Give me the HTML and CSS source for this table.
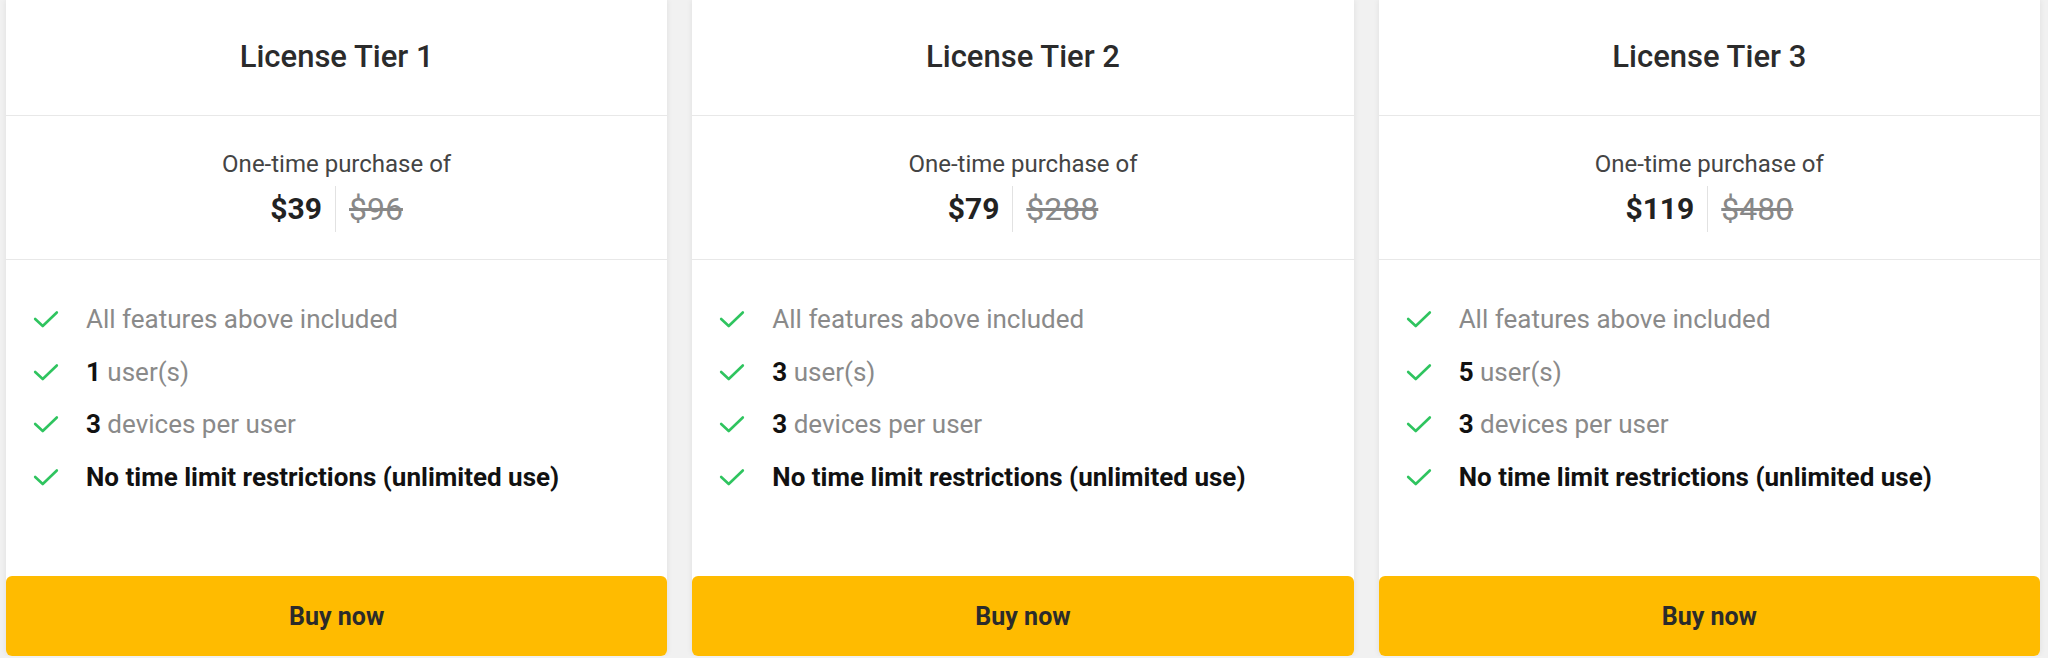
FILE: index.html
```html
<!DOCTYPE html>
<html lang="en">
<head>
    <meta charset="UTF-8">
    <meta name="viewport" content="width=device-width, initial-scale=1.0">
    <title>License tiers</title>
    <link rel="stylesheet" href="styles.css">
</head>
<body>
    <div class="plans">
        <!-- Tier 1 -->
        <div class="card">
            <div class="card-head">License Tier 1</div>
            <div class="price-box">
                <div class="price-label">One-time purchase of</div>
                <div class="price-row">
                    <span class="price-now">$39</span>
                    <span class="price-old">$96</span>
                </div>
            </div>
            <ul class="features">
                <li><svg class="check" viewBox="0 0 24 18"><polyline points="2,9 9,15.5 22,3"/></svg><span>All features above included</span></li>
                <li><svg class="check" viewBox="0 0 24 18"><polyline points="2,9 9,15.5 22,3"/></svg><span><b>1</b> user(s)</span></li>
                <li><svg class="check" viewBox="0 0 24 18"><polyline points="2,9 9,15.5 22,3"/></svg><span><b>3</b> devices per user</span></li>
                <li class="strong"><svg class="check" viewBox="0 0 24 18"><polyline points="2,9 9,15.5 22,3"/></svg><span>No time limit restrictions (unlimited use)</span></li>
            </ul>
            <button class="buy">Buy now</button>
        </div>

        <!-- Tier 2 -->
        <div class="card">
            <div class="card-head">License Tier 2</div>
            <div class="price-box">
                <div class="price-label">One-time purchase of</div>
                <div class="price-row">
                    <span class="price-now">$79</span>
                    <span class="price-old">$288</span>
                </div>
            </div>
            <ul class="features">
                <li><svg class="check" viewBox="0 0 24 18"><polyline points="2,9 9,15.5 22,3"/></svg><span>All features above included</span></li>
                <li><svg class="check" viewBox="0 0 24 18"><polyline points="2,9 9,15.5 22,3"/></svg><span><b>3</b> user(s)</span></li>
                <li><svg class="check" viewBox="0 0 24 18"><polyline points="2,9 9,15.5 22,3"/></svg><span><b>3</b> devices per user</span></li>
                <li class="strong"><svg class="check" viewBox="0 0 24 18"><polyline points="2,9 9,15.5 22,3"/></svg><span>No time limit restrictions (unlimited use)</span></li>
            </ul>
            <button class="buy">Buy now</button>
        </div>

        <!-- Tier 3 -->
        <div class="card">
            <div class="card-head">License Tier 3</div>
            <div class="price-box">
                <div class="price-label">One-time purchase of</div>
                <div class="price-row">
                    <span class="price-now">$119</span>
                    <span class="price-old">$480</span>
                </div>
            </div>
            <ul class="features">
                <li><svg class="check" viewBox="0 0 24 18"><polyline points="2,9 9,15.5 22,3"/></svg><span>All features above included</span></li>
                <li><svg class="check" viewBox="0 0 24 18"><polyline points="2,9 9,15.5 22,3"/></svg><span><b>5</b> user(s)</span></li>
                <li><svg class="check" viewBox="0 0 24 18"><polyline points="2,9 9,15.5 22,3"/></svg><span><b>3</b> devices per user</span></li>
                <li class="strong"><svg class="check" viewBox="0 0 24 18"><polyline points="2,9 9,15.5 22,3"/></svg><span>No time limit restrictions (unlimited use)</span></li>
            </ul>
            <button class="buy">Buy now</button>
        </div>
    </div>
</body>
</html>
```

FILE: styles.css
```css
body {
    margin: 0;
    background-color: #f1f1f1;
    font-family: 'Roboto', 'Liberation Sans', sans-serif;
    color: #333;
}

.plans {
    display: grid;
    grid-template-columns: repeat(3, 1fr);
    gap: 25px;
    padding: 0 8px 0 6px;
}

.card {
    display: flex;
    flex-direction: column;
    height: 656px;
    background-color: #fff;
    box-shadow: 0 0 6px rgba(0, 0, 0, 0.08);
    border-radius: 0 0 6px 6px;
}

.card-head {
    height: 115px;
    line-height: 114px;
    text-align: center;
    font-size: 31px;
    font-weight: 500;
    color: #2b2b2b;
    border-bottom: 1px solid #e8e8e8;
}

.price-box {
    height: 110px;
    padding-top: 33px;
    text-align: center;
    border-bottom: 1px solid #e8e8e8;
}

.price-label {
    line-height: 30px;
    font-size: 24px;
    color: #444;
}

.price-row {
    display: flex;
    justify-content: center;
    align-items: center;
    margin-top: 7px;
    height: 46px;
}

.price-now {
    font-size: 30px;
    font-weight: 700;
    color: #222;
    padding-right: 13px;
    line-height: 46px;
    border-right: 1px solid #e2e2e2;
}

.price-old {
    font-size: 32px;
    color: #888;
    padding-left: 13px;
    text-decoration: line-through;
}

.features {
    list-style: none;
    margin: 0;
    padding: 33px 0 0 27px;
}

.features li {
    display: flex;
    align-items: center;
    height: 52.5px;
    font-size: 26px;
    color: #8a8a8a;
}

.features b {
    color: #111;
}

.features li.strong {
    font-weight: 700;
    color: #111;
}

.check {
    width: 26px;
    height: 20px;
    margin-right: 27px;
    fill: none;
    stroke: #2fc45f;
    stroke-width: 2.4;
    stroke-linecap: round;
    stroke-linejoin: round;
}

.buy {
    margin-top: auto;
    height: 80px;
    border: none;
    border-radius: 6px;
    background-color: #ffbb00;
    font-family: 'Roboto', sans-serif;
    font-size: 25px;
    font-weight: 700;
    color: #2b2b2b;
    cursor: pointer;
}
```
